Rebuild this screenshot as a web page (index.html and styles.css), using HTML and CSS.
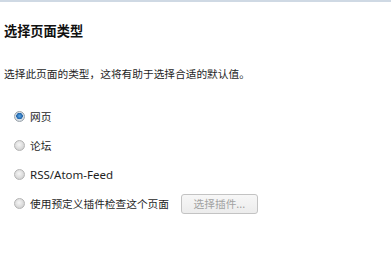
FILE: index.html
```html
<!DOCTYPE html>
<html lang="zh-CN">

<head>
    <meta charset="UTF-8">
    <meta name="viewport" content="width=device-width, initial-scale=1.0">
    <title>选择页面类型</title>
    <link rel="stylesheet" href="styles.css">
</head>

<body>
    <div class="page">
        <h1 class="title">选择页面类型</h1>
        <p class="desc">选择此页面的类型，这将有助于选择合适的默认值。</p>

        <div class="options">
            <label class="option">
                <input type="radio" name="page-type" checked>
                <span>网页</span>
            </label>
            <label class="option">
                <input type="radio" name="page-type">
                <span>论坛</span>
            </label>
            <label class="option">
                <input type="radio" name="page-type">
                <span class="latin">RSS/Atom-Feed</span>
            </label>
            <label class="option">
                <input type="radio" name="page-type">
                <span>使用预定义插件检查这个页面</span>
                <button class="plugin-btn" disabled>选择插件...</button>
            </label>
        </div>
    </div>
</body>

</html>
```

FILE: styles.css
```css
body {
    margin: 0;
    background-color: #ffffff;
    color: #1e1e1e;
    font-family: "Noto Sans", "Noto Sans CJK SC", sans-serif;
}

.page {
    border-top: 2px solid #cfd9e4;
    padding: 20px 4px 0 4px;
}

.title {
    margin: 0;
    font-size: 13.2px;
    line-height: 18px;
    font-weight: bold;
    color: #111111;
}

.desc {
    margin: 26px 0 0 0;
    font-size: 10.7px;
    line-height: 16px;
}

.options {
    margin-top: 20px;
    padding-left: 10px;
    display: flex;
    flex-direction: column;
}

.option {
    display: flex;
    align-items: center;
    height: 29px;
    font-size: 10.7px;
}

.latin {
    font-size: 11.5px;
}

.option input {
    appearance: none;
    -webkit-appearance: none;
    width: 11px;
    height: 11px;
    margin: 0 5px 0 0;
    border: 1px solid #b4b4b4;
    border-radius: 50%;
    background: radial-gradient(circle at 45% 40%, #f6f6f6 0%, #dcdcdc 55%, #c4c4c4 100%);
    box-sizing: border-box;
}

.option input:checked {
    border-color: #9aa3aa;
    background: radial-gradient(circle at 50% 45%, #5aa8e8 0%, #1f62a8 45%, #d9e1e8 52%, #c9d1d8 100%);
}

.plugin-btn {
    margin-left: 12px;
    width: 77px;
    height: 20px;
    border: 1px solid #c3c3c3;
    border-radius: 3px;
    background: linear-gradient(#f7f7f7, #ececec);
    color: #a2a2a2;
    font-family: "Noto Sans CJK SC", sans-serif;
    font-size: 10.7px;
    padding: 0;
}
```
